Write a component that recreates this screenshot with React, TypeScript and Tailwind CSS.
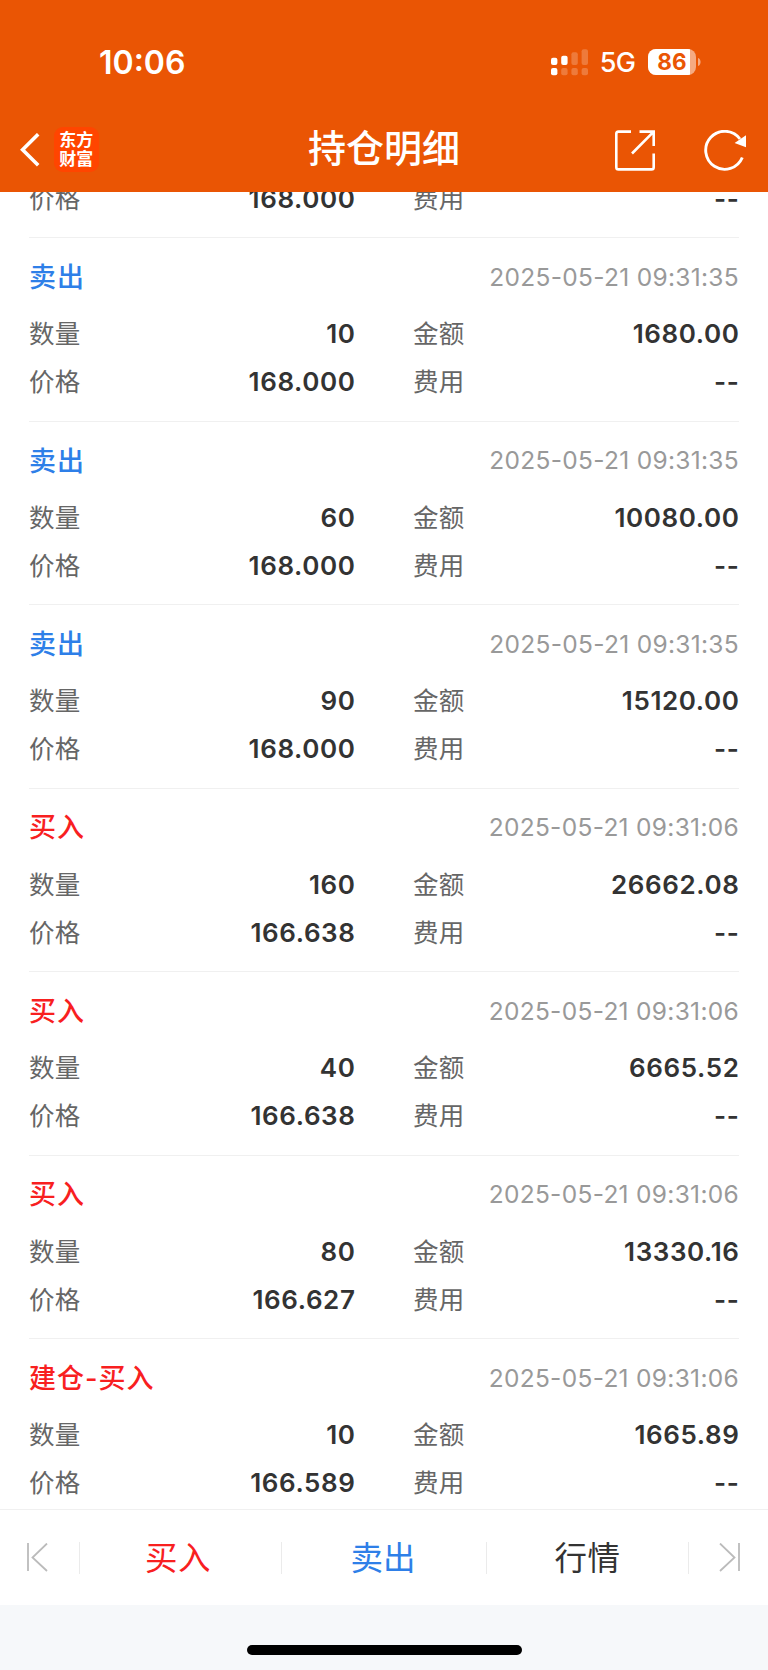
type Trade = {
  side: "buy" | "sell";
  label: string;
  time: string;
  qty: string;
  amount: string;
  price: string;
};

const trades: Trade[] = [
  { side: "sell", label: "卖出", time: "2025-05-21 09:31:35", qty: "10", amount: "1680.00", price: "168.000" },
  { side: "sell", label: "卖出", time: "2025-05-21 09:31:35", qty: "60", amount: "10080.00", price: "168.000" },
  { side: "sell", label: "卖出", time: "2025-05-21 09:31:35", qty: "90", amount: "15120.00", price: "168.000" },
  { side: "buy", label: "买入", time: "2025-05-21 09:31:06", qty: "160", amount: "26662.08", price: "166.638" },
  { side: "buy", label: "买入", time: "2025-05-21 09:31:06", qty: "40", amount: "6665.52", price: "166.638" },
  { side: "buy", label: "买入", time: "2025-05-21 09:31:06", qty: "80", amount: "13330.16", price: "166.627" },
  { side: "buy", label: "建仓-买入", time: "2025-05-21 09:31:06", qty: "10", amount: "1665.89", price: "166.589" },
];

function Signal() {
  return (
    <svg width="38" height="27" viewBox="0 0 38 27" fill="#fff">
      <rect x="0" y="8.7" width="6.4" height="7.4" rx="2" />
      <rect x="10.2" y="6.7" width="6.4" height="9.4" rx="2" />
      <rect x="20.4" y="3.2" width="6.4" height="12.9" rx="2" fillOpacity="0.22" />
      <rect x="30.6" y="0.2" width="6.4" height="15.9" rx="2" fillOpacity="0.22" />
      <rect x="0" y="19" width="6.4" height="7.2" rx="2" />
      <rect x="10.2" y="19" width="6.4" height="7.2" rx="2" fillOpacity="0.22" />
      <rect x="20.4" y="19" width="6.4" height="7.2" rx="2" fillOpacity="0.22" />
      <rect x="30.6" y="19" width="6.4" height="7.2" rx="2" fillOpacity="0.22" />
    </svg>
  );
}

function Battery() {
  return (
    <div className="flex items-center">
      <div className="flex h-[26px] w-12 overflow-hidden rounded-[8px] bg-white/50">
        <div className="flex w-[41.5px] items-center justify-end bg-white pr-[3px] text-[22.5px] leading-none font-bold text-[#ea5504]">
          86
        </div>
      </div>
      <svg className="ml-[2px]" width="3" height="8" viewBox="0 0 3 8">
        <path d="M0 0C3.4 1 3.4 7 0 8Z" fill="#fff" fillOpacity="0.5" />
      </svg>
    </div>
  );
}

function Header() {
  return (
    <header className="h-48 shrink-0 bg-[#ea5504] text-white">
      <div className="flex h-[108px] items-start justify-between pt-[49px] pr-[67px] pl-[99px]">
        <span className="text-[32px] leading-[28px] font-semibold">10:06</span>
        <div className="flex h-[26px] items-center">
          <Signal />
          <span className="ml-[11px] pt-[2px] text-[27px] leading-[26px] font-medium tracking-[-0.5px]">5G</span>
          <div className="ml-[12.5px]">
            <Battery />
          </div>
        </div>
      </div>

      <div className="grid h-[84px] grid-cols-[1fr_auto_1fr] items-start">
        <div className="flex items-start pt-[19px] pl-5">
          <svg className="mt-[6px]" width="21" height="34" viewBox="0 0 21 34" fill="none" stroke="#fff" strokeWidth="3.6">
            <path d="M18.2 1.2L2.6 16.7L18.2 32.2" />
          </svg>
          <div className="ml-[12.5px] flex h-[45px] w-[45.5px] flex-col items-center justify-center rounded-[9px] bg-[#ff4500] text-[17px] leading-[19px] font-bold">
            <span>东方</span>
            <span>财富</span>
          </div>
        </div>
        <h1 className="pt-[14px] text-[38px] leading-[52px] font-medium">持仓明细</h1>
        <div className="flex justify-end pt-[22px] pr-[20px]">
          <svg width="42" height="42" viewBox="0 0 42 42" fill="none" stroke="#fff" strokeWidth="2.6">
            <path d="M17 1.6H4.5Q2.3 1.6 2.3 3.8V37.2Q2.3 39.4 4.5 39.4H37.5Q39.7 39.4 39.7 37.2V23.5" />
            <path d="M25.5 1.6H39.7V16M39.2 2.1L18 23.5" />
          </svg>
          <svg className="ml-[48px]" width="44" height="42" viewBox="0 0 44 42" fill="none">
            <path d="M38.3 27.5A19 19 0 1 1 36 9" stroke="#fff" strokeWidth="2.9" />
            <path d="M42 5.3L30.6 13L42 17.3Z" fill="#fff" />
          </svg>
        </div>
      </div>
    </header>
  );
}

function Pair({ label, value }: { label: string; value: string }) {
  return (
    <div className="flex items-center justify-between">
      <span className="text-[25.5px] tracking-[0.3px] text-[#666]">{label}</span>
      <span className="-mr-[0.5px] text-[26px] font-semibold tracking-[0.6px] text-[#333]">{value}</span>
    </div>
  );
}

function Row({ children }: { children: React.ReactNode }) {
  return <div className="grid h-12 grid-cols-[326px_326px] justify-between leading-[48px]">{children}</div>;
}

function TradeItem({ trade }: { trade: Trade }) {
  return (
    <li className="h-[183.43px] border-t border-[#f0f0f0] pt-[15px]">
      <div className="flex h-12 items-center justify-between">
        <span
          className={`pt-[2px] text-[27px] font-medium tracking-[1px] ${trade.side === "buy" ? "text-[#f8201f]" : "text-[#2e7fe8]"}`}
        >
          {trade.label}
        </span>
        <span className="text-[24.5px] tracking-[0.3px] text-[#999]">{trade.time}</span>
      </div>
      <div className="mt-[9px]">
        <Row>
          <Pair label="数量" value={trade.qty} />
          <Pair label="金额" value={trade.amount} />
        </Row>
        <Row>
          <Pair label="价格" value={trade.price} />
          <Pair label="费用" value="--" />
        </Row>
      </div>
    </li>
  );
}

function Divider() {
  return <div className="h-8 w-px bg-[#ebebeb]" />;
}

function BottomBar() {
  return (
    <nav className="flex h-24 shrink-0 items-center border-t border-[#f0f0f0] bg-white text-[32.5px]">
      <div className="flex w-[79px] pl-[26px]">
        <svg width="22" height="30" viewBox="0 0 22 30" fill="none" stroke="#bbb" strokeWidth="1.8">
          <path d="M2 0V28M21 0.5L6.5 14.5L21 28" />
        </svg>
      </div>
      <Divider />
      <button className="w-[201px] pt-[3px] pr-[5px] tracking-[0.5px] text-[#f8201f]">买入</button>
      <Divider />
      <button className="w-[204px] pt-[3px] pr-[2px] text-[#2e7fe8]">卖出</button>
      <Divider />
      <button className="w-[201px] pt-[3px] tracking-[0.5px] text-[#333]">行情</button>
      <Divider />
      <div className="flex flex-1 justify-end pr-[27px]">
        <svg width="22" height="30" viewBox="0 0 22 30" fill="none" stroke="#bbb" strokeWidth="1.8">
          <path d="M20 0V28M1 0.5L15.5 14.5L1 28" />
        </svg>
      </div>
    </nav>
  );
}

export default function App() {
  return (
    <div className="flex h-[1670px] w-[768px] flex-col overflow-hidden bg-[#f6f8fa] font-['Inter','Noto_Sans_CJK_SC',sans-serif]">
      <Header />
      <main className="h-[1317px] shrink-0 overflow-hidden bg-white px-[29px]">
        {/* tail of the entry scrolled under the header */}
        <div className="-mt-[17px] h-[62.4px]">
          <Row>
            <Pair label="价格" value="168.000" />
            <Pair label="费用" value="--" />
          </Row>
        </div>
        <ul>
          {trades.map((trade, i) => (
            <TradeItem key={i} trade={trade} />
          ))}
        </ul>
      </main>
      <BottomBar />
      <div className="flex flex-1 items-start justify-center pt-[39.5px]">
        <div className="h-[10px] w-[275px] rounded-full bg-black" />
      </div>
    </div>
  );
}
